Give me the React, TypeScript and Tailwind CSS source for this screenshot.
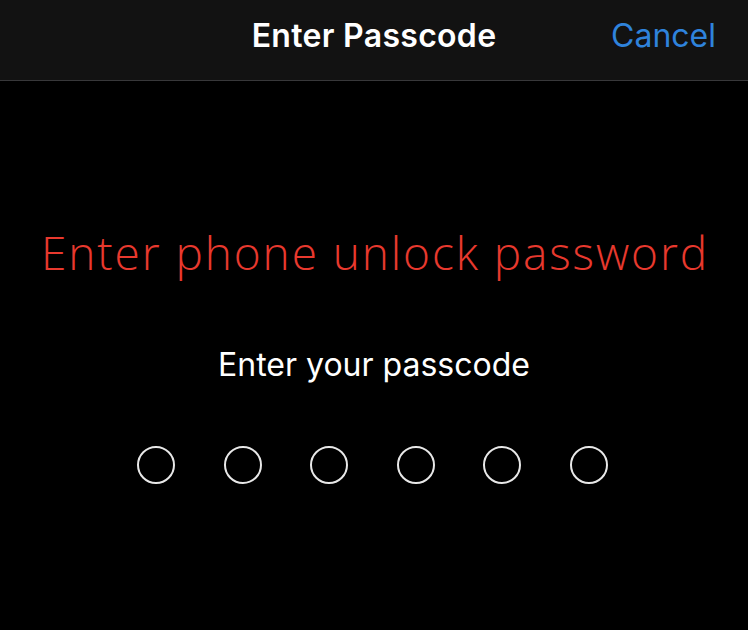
import React from "react";

export default function App() {
  return (
    <div className="w-[748px] h-[630px] bg-black flex flex-col" style={{ fontFamily: "Inter, 'Liberation Sans', sans-serif" }}>
      <div className="h-[81px] pb-[9px] bg-[#121212] border-b border-[#38383a] relative flex items-center justify-center shrink-0">
        <div className="text-white text-[32px] font-semibold tracking-[0.3px]">Enter Passcode</div>
        <div className="absolute right-[32px] top-0 bottom-[9px] flex items-center text-[#2f83dc] text-[32px]">Cancel</div>
      </div>
      <div className="flex flex-col items-center">
        <div className="mt-[143px] pl-[2px] text-[#e8392e] text-[46px] font-light leading-[56px] tracking-[1.9px] whitespace-nowrap" style={{ fontFamily: "'Open Sans', Lato, sans-serif" }}>
          Enter phone unlock password
        </div>
        <div className="mt-[65px] text-white text-[32px] leading-[40px]">Enter your passcode</div>
        <div className="mt-[61px] flex gap-[48.5px] pr-[3px]">
          {[0, 1, 2, 3, 4, 5].map((i) => (
            <div key={i} className="w-[38px] h-[38px] rounded-full border-2 border-[#e8e8e8]" />
          ))}
        </div>
      </div>
    </div>
  );
}
